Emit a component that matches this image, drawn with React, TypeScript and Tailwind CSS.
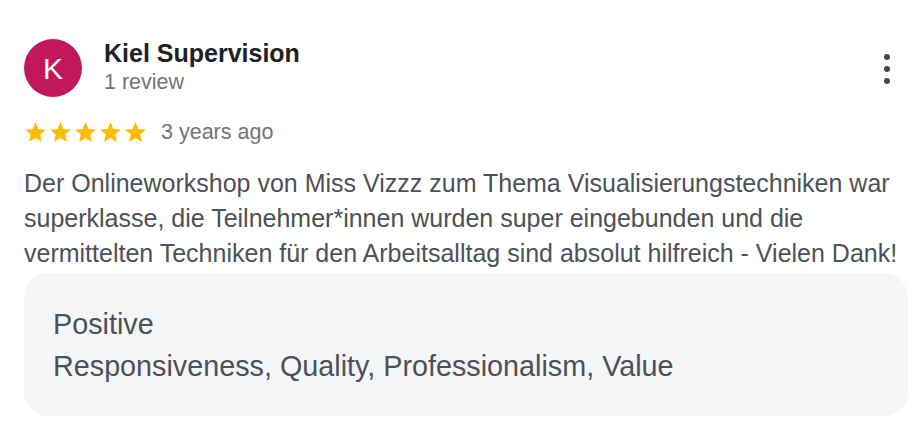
function Star() {
  return (
    <svg viewBox="0 0 24 24" className="w-[25px] h-[25px] fill-[#fbbc04]">
      <path d="M12 17.27L18.18 21l-1.64-7.03L22 9.24l-7.19-.61L12 2 9.19 8.63 2 9.24l5.46 4.73L5.82 21z" />
    </svg>
  )
}

export default function App() {
  return (
    <div className="w-[924px] h-[424px] bg-white font-['Liberation_Sans',Arial,sans-serif]">
      <div className="pl-6 pr-4 pt-[39px]">
        {/* header */}
        <div className="flex items-start">
          <div className="w-[58px] h-[58px] rounded-full bg-[#c2185b] flex items-center justify-center text-white text-[30px] shrink-0">
            K
          </div>
          <div className="ml-[22px] -mt-[1px] flex flex-col">
            <span className="text-[25px] leading-[30px] font-bold text-[#202124]">Kiel Supervision</span>
            <span className="text-[21.5px] leading-[29px] text-[#70757a]">1 review</span>
          </div>
          <button className="ml-auto mt-[15px] mr-[18px] flex flex-col gap-[6px] items-center">
            <span className="w-[6px] h-[6px] rounded-full bg-[#444746]" />
            <span className="w-[6px] h-[6px] rounded-full bg-[#444746]" />
            <span className="w-[6px] h-[6px] rounded-full bg-[#444746]" />
          </button>
        </div>

        {/* rating */}
        <div className="flex items-center mt-[19px]">
          <div className="flex -ml-[1px]">
            <Star />
            <Star />
            <Star />
            <Star />
            <Star />
          </div>
          <span className="ml-[13px] text-[21.5px] text-[#70757a]">3 years ago</span>
        </div>

        {/* text */}
        <p className="mt-[18px] text-[25px] leading-[35px] text-[#4d5156]">
          Der Onlineworkshop von Miss Vizzz zum Thema Visualisierungstechniken war superklasse, die
          Teilnehmer*innen wurden super eingebunden und die vermittelten Techniken für den Arbeitsalltag
          sind absolut hilfreich - Vielen Dank!
        </p>

        {/* highlights */}
        <div className="mt-[2px] w-[884px] h-[143px] rounded-[24px] bg-[#f5f6f8] px-[29px] pt-[30px]">
          <div className="text-[28.75px] leading-[42px] text-[#4d5156]">Positive</div>
          <div className="text-[28.75px] leading-[42px] text-[#4d5156]">
            Responsiveness, Quality, Professionalism, Value
          </div>
        </div>
      </div>
    </div>
  )
}
